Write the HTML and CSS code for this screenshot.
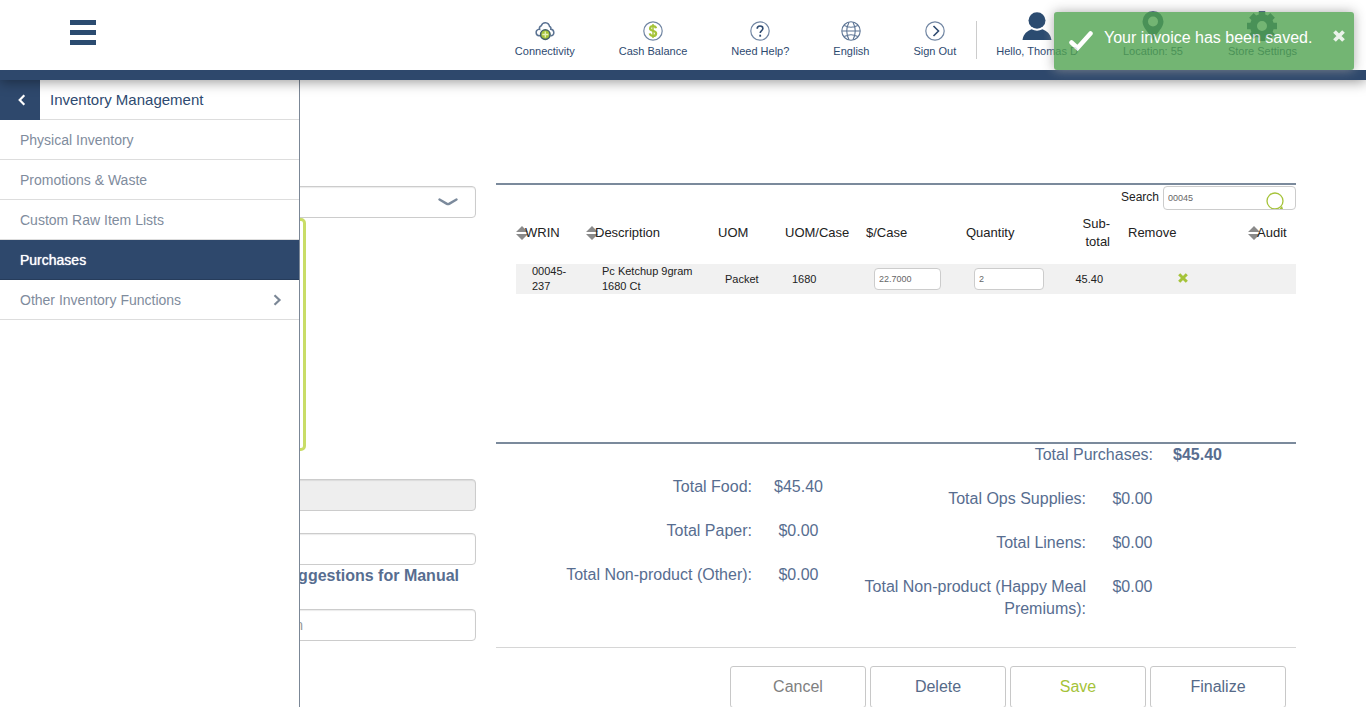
FILE: index.html
```html
<!DOCTYPE html>
<html lang="en">
<head>
<meta charset="utf-8">
<title>Inventory Management - Purchases</title>
<meta name="viewport" content="width=device-width, initial-scale=1">
<link rel="stylesheet" href="styles.css">
</head>
<body>
<header class="topbar">
  <button class="menu-toggle" type="button" aria-label="Menu"><span></span><span></span><span></span></button>
  <nav class="topnav">
    <a class="topnav-item" href="#">
      <svg class="icon" viewBox="0 0 20 20" fill="none" stroke="#5b7393" stroke-width="1.500"><path d="M5 14.800H4A3.300 3.300 0 0 1 3.400 8.400Q4 8.200 4.600 8.400Q3.800 5.500 6.300 4.700Q7.300 1.600 10.500 1.700Q14 2 14.600 5.600Q16.300 6 15.800 8.300A3.300 3.300 0 0 1 16.300 14.800H15.500"/><circle cx="10.300" cy="13.600" r="4.800" fill="#a5c339" stroke="#43606b"/><path d="M10.300 10.500v6M7.300 13.500h6" stroke="#e6f0b8" stroke-width="1.300"/></svg>
      Connectivity</a>
    <a class="topnav-item" href="#">
      <svg class="icon" viewBox="0 0 20 20" fill="none" stroke="#7186a3" stroke-width="1.200"><circle cx="10" cy="10" r="9.200"/><path d="M13 7.300C12.700 5.800 11.700 5.100 10 5.100C8.200 5.100 7.100 6 7.100 7.400C7.100 10.600 13.100 8.900 13.100 12.400C13.100 13.900 12 14.900 10 14.900C8.200 14.900 7.100 14.100 6.800 12.400" stroke="#a5c339" stroke-width="2.300"/><path d="M10 3v14" stroke="#a5c339" stroke-width="1.500"/></svg>
      Cash Balance</a>
    <a class="topnav-item" href="#">
      <svg class="icon" viewBox="0 0 20 20" fill="none" stroke="#7186a3" stroke-width="1.200"><circle cx="10" cy="10" r="9.200"/><path d="M7.200 7.800C7.200 5.900 8.300 5 10 5C11.700 5 12.900 6 12.900 7.500C12.900 9.600 10.200 9.500 10.200 12" stroke="#2e4a70" stroke-width="1.600"/><path d="M10.200 13.700v2" stroke="#2e4a70" stroke-width="1.800"/></svg>
      Need Help?</a>
    <a class="topnav-item" href="#">
      <svg class="icon" viewBox="0 0 20 20" fill="none" stroke="#5d7595" stroke-width="1.100"><circle cx="10" cy="10" r="9.200"/><path d="M1 10h18M3.200 4.500Q10 8 16.800 4.500M3.200 15.500Q10 12 16.800 15.500M8 1.200Q3.500 10 8 18.800M12 1.200Q16.500 10 12 18.800"/></svg>
      English</a>
    <a class="topnav-item" href="#">
      <svg class="icon" viewBox="0 0 20 20" fill="none" stroke="#7186a3" stroke-width="1.200"><circle cx="10" cy="10" r="9.200"/><path d="M8.500 5l5 5-5 5" stroke="#2e4a70" stroke-width="1.600"/></svg>
      Sign Out</a>
  </nav>
  <nav class="topnav topnav-account">
    <a class="topnav-item" href="#">
      <svg class="icon icon-large" viewBox="0 0 30 30" fill="#2b4b70"><ellipse cx="15" cy="9.500" rx="8.500" ry="8.300"/><path d="M0.500 29C1.500 22.500 5.500 20 9.500 18.300Q15 21 20.500 18.300C24.500 20 28.500 22.500 29.500 29z"/></svg>
      Hello, Thomas D</a>
    <a class="topnav-item" href="#">
      <svg class="icon icon-large" viewBox="0 0 30 30" fill="#2b4b70"><path fill-rule="evenodd" d="M15 0A10.500 10.500 0 0 1 25.500 10.500C25.500 17 19 21 15 30C11 21 4.500 17 4.500 10.500A10.500 10.500 0 0 1 15 0zM15 5.500a5 5 0 1 0 0 10a5 5 0 0 0 0-10z"/></svg>
      Location: 55</a>
    <a class="topnav-item" href="#">
      <svg class="icon icon-large" viewBox="0 0 30 30" fill="none" stroke="#2b4b70"><circle cx="15" cy="15" r="8.500" stroke-width="7"/><g stroke-width="6.500"><path d="M15 0v5M15 25v5M0 15h5M25 15h5M4.400 4.400l4 4M21.600 21.600l4 4M25.600 4.400l-4 4M8.400 21.600l-4 4"/></g></svg>
      Store Settings</a>
  </nav>
</header>

<aside class="sidebar">
  <div class="sidebar-head">
    <button class="sidebar-back" type="button" aria-label="Back"><svg viewBox="0 0 12 12" fill="none" stroke="#fff" stroke-width="2.200"><path d="M8.300 1.300L3.700 6l4.600 4.700"/></svg></button>
    <h1 class="sidebar-title">Inventory Management</h1>
  </div>
  <nav class="sidebar-nav">
    <a href="#">Physical Inventory</a>
    <a href="#">Promotions &amp; Waste</a>
    <a href="#">Custom Raw Item Lists</a>
    <a class="selected" href="#" aria-current="page">Purchases</a>
    <a href="#">Other Inventory Functions <svg viewBox="0 0 12 12" fill="none" stroke="#7b8796" stroke-width="2.200"><path d="M3.500 1.300L8.500 6l-5 4.700"/></svg></a>
  </nav>
</aside>

<main class="page">
  <form class="entry">
    <div class="select-wrap">
      <select class="field" aria-label="Vendor"><option></option></select>
      <svg class="select-arrow" viewBox="0 0 20 8" fill="none" stroke="#7b8a9c" stroke-width="2.400" stroke-linecap="round" stroke-linejoin="round"><path d="M1.500 1.500L8.500 5.600Q10 6.400 11.500 5.600L18.500 1.500"/></svg>
    </div>
    <div class="entry-highlight"></div>
    <input class="field" type="text" aria-label="Invoice total" disabled>
    <input class="field field-spaced" type="text" aria-label="Invoice number">
    <label class="entry-label" for="manual">Suggestions for Manual</label>
    <input class="field" id="manual" type="text" placeholder="Enter item number or description">
  </form>

  <section class="invoice">
    <div class="items">
      <div class="search">
        <label for="search">Search</label>
        <div class="search-box">
          <input id="search" class="small-field" type="text" value="00045">
          <svg class="search-icon" viewBox="0 0 18 17" fill="none" stroke="#a5c339" stroke-width="1.300"><circle cx="9" cy="9" r="8"/><path d="M13.500 17l2.500-3 1 3z" fill="#a5c339" stroke="none"/></svg>
        </div>
      </div>
      <table class="items-table">
        <colgroup><col class="c-wrin"><col class="c-desc"><col class="c-uom"><col class="c-case"><col class="c-price"><col class="c-qty"><col class="c-sub"><col class="c-remove"><col class="c-audit"></colgroup>
        <thead>
          <tr>
            <th class="sortable"><svg viewBox="0 0 12 14" fill="#8a8a8a"><path d="M0 6L6 0l6 6zM0 8h12l-6 6z"/></svg>WRIN</th>
            <th class="sortable"><svg viewBox="0 0 12 14" fill="#8a8a8a"><path d="M0 6L6 0l6 6zM0 8h12l-6 6z"/></svg>Description</th>
            <th>UOM</th>
            <th>UOM/Case</th>
            <th>$/Case</th>
            <th>Quantity</th>
            <th class="num">Sub-<br>total</th>
            <th>Remove</th>
            <th class="sortable"><svg viewBox="0 0 12 14" fill="#8a8a8a"><path d="M0 6L6 0l6 6zM0 8h12l-6 6z"/></svg>Audit</th>
          </tr>
        </thead>
        <tbody>
          <tr>
            <td>00045-237</td>
            <td>Pc Ketchup 9gram 1680 Ct</td>
            <td>Packet</td>
            <td>1680</td>
            <td class="entry-cell"><input class="small-field" type="text" value="22.7000" aria-label="Price per case"></td>
            <td class="entry-cell"><input class="small-field" type="text" value="2" aria-label="Quantity"></td>
            <td class="num">45.40</td>
            <td class="center"><button class="remove" type="button" aria-label="Remove"><svg viewBox="0 0 10 10" stroke="#a5c339" stroke-width="3"><path d="M1.200 1.200l7.600 7.600M8.800 1.200L1.200 8.800"/></svg></button></td>
            <td></td>
          </tr>
        </tbody>
      </table>
    </div>

    <div class="totals">
      <dl class="totals-group totals-left">
        <dt>Total Food:</dt><dd>$45.40</dd>
        <dt>Total Paper:</dt><dd>$0.00</dd>
        <dt>Total Non-product (Other):</dt><dd>$0.00</dd>
      </dl>
      <div class="totals-right">
        <div class="grand-total"><span>Total Purchases:</span><strong>$45.40</strong></div>
        <dl class="totals-group">
          <dt>Total Ops Supplies:</dt><dd>$0.00</dd>
          <dt>Total Linens:</dt><dd>$0.00</dd>
          <dt>Total Non-product (Happy Meal Premiums):</dt><dd>$0.00</dd>
        </dl>
      </div>
    </div>

    <div class="actions">
      <button class="btn btn-muted" type="button">Cancel</button>
      <button class="btn" type="button">Delete</button>
      <button class="btn btn-save" type="button">Save</button>
      <button class="btn" type="button">Finalize</button>
    </div>
  </section>
</main>

<div class="toast" role="status">
  <svg class="toast-check" viewBox="0 0 24 20" fill="none" stroke="#fff" stroke-width="4.500" stroke-linecap="round"><path d="M2.500 11.500L8.500 17L21.500 2.500"/></svg>
  <span class="toast-text">Your invoice has been saved.</span>
  <button class="toast-close" type="button" aria-label="Close"><svg viewBox="0 0 12 12" stroke="#fff" stroke-opacity="0.850" stroke-width="3.800"><path d="M1.500 1.500l9 9M10.500 1.500l-9 9"/></svg></button>
</div>
</body>
</html>
```
FILE: styles.css
```css
* { box-sizing: border-box; }

html { scrollbar-width: none; }

body {
  margin: 0;
  min-height: 100vh;
  position: relative;
  background: #fff;
  color: #576d90;
  font-family: "Liberation Sans", Arial, sans-serif;
  font-size: 16px;
  line-height: 22px;
}

button, input, select { font-family: inherit; }
button { padding: 0; border: 0; background: none; cursor: pointer; }
a { color: inherit; text-decoration: none; }
svg { display: block; flex: none; }

/* Top bar */
.topbar {
  position: relative;
  z-index: 3;
  display: flex;
  align-items: flex-start;
  height: 80px;
  padding: 0 69px 0 70px;
  background: #fff;
  border-bottom: 10px solid #2e486c;
  box-shadow: 0 2px 12px rgba(0, 0, 0, 0.4);
}

.menu-toggle {
  display: flex;
  flex-direction: column;
  gap: 5px;
  width: 26px;
  margin: 20px auto 0 0;
}
.menu-toggle span { height: 5px; background: #2b4b70; }

.topnav {
  display: flex;
  align-items: flex-end;
  gap: 44px;
  height: 38px;
  margin-top: 21px;
}
.topnav-account {
  gap: 45px;
  margin-left: 20px;
  padding-left: 19px;
  border-left: 1px solid #ccc;
}
.topnav-item {
  display: flex;
  flex-direction: column;
  align-items: center;
  gap: 2px;
  color: #2e4a70;
  font-size: 11px;
  line-height: 16px;
  white-space: nowrap;
}
.icon { width: 20px; height: 20px; }
.icon-large { width: 30px; height: 30px; }

/* Slide-out menu */
.sidebar {
  position: absolute;
  z-index: 2;
  top: 80px;
  bottom: 0;
  left: 0;
  width: 300px;
  background: #fff;
  border-right: 1px solid #7b8796;
}
.sidebar-head {
  display: flex;
  height: 40px;
  border-bottom: 1px solid #ddd;
}
.sidebar-back {
  display: flex;
  align-items: center;
  justify-content: center;
  width: 40px;
  height: 40px;
  padding-left: 4px;
  background: #2e486c;
}
.sidebar-back svg { width: 12px; height: 12px; }
.sidebar-title {
  margin: 0 0 0 10px;
  color: #2e4a70;
  font-size: 15px;
  font-weight: 400;
  line-height: 40px;
}
.sidebar-nav a {
  display: flex;
  align-items: center;
  justify-content: space-between;
  height: 40px;
  padding: 0 16px 0 20px;
  border-bottom: 1px solid #ddd;
  color: #7f8c9d;
  font-size: 14px;
}
.sidebar-nav svg { width: 12px; height: 12px; }
.sidebar-nav .selected {
  background: #2e486c;
  border-color: #263c5b;
  color: #fff;
  text-shadow: 0 0 1px #fff;
}

/* Page columns */
.page {
  display: grid;
  grid-template-columns: 406fr 800fr;
  gap: 20px;
  align-items: start;
  padding: 103px 70px 0;
}

/* Invoice entry */
.entry { display: flex; flex-direction: column; padding-top: 3px; }
.field {
  width: 100%;
  height: 32px;
  padding: 0 29px;
  border: 1px solid #ccc;
  border-radius: 4px;
  background: #fff;
  box-shadow: inset 0 1px 1px rgba(0, 0, 0, 0.08);
  color: #555;
  font-size: 14px;
}
.field:disabled { background: #eee; }
.field::placeholder { color: #999; }
.field-spaced { margin-top: 22px; }
.select-wrap { position: relative; }
select.field { display: block; appearance: none; }
.select-arrow {
  position: absolute;
  top: 12px;
  right: 18px;
  width: 20px;
  height: 8px;
}
.entry-highlight {
  width: 236px;
  height: 233px;
  margin-bottom: 28px;
  border: 3px solid #c9dd67;
  border-radius: 5px;
}
.entry-label {
  padding-right: 17px;
  margin-bottom: 22px;
  font-weight: 700;
  text-align: right;
}

/* Item list */
.items {
  min-height: 261px;
  border-top: 2px solid #7b8a9c;
  border-bottom: 2px solid #7b8a9c;
  color: #222;
}
.search {
  display: flex;
  justify-content: flex-end;
  gap: 4px;
  padding-top: 1px;
  font-size: 12px;
}
.search-box { position: relative; width: 133px; }
.search-box .small-field { height: 24px; }
.search-icon {
  position: absolute;
  right: 12px;
  bottom: 1px;
  width: 18px;
  height: 17px;
}
.small-field {
  display: block;
  width: 100%;
  height: 22px;
  padding: 0 4px;
  border: 1px solid #ccc;
  border-radius: 4px;
  background: #fff;
  color: #666;
  font-size: 9px;
}

.items-table {
  width: calc(100% - 20px);
  margin-left: 20px;
  table-layout: fixed;
  border-collapse: collapse;
}
.c-wrin { width: 70px; }
.c-desc { width: 123px; }
.c-uom { width: 67px; }
.c-case { width: 81px; }
.c-price { width: 100px; }
.c-qty { width: 103px; }
.c-sub { width: 59px; }
.c-remove { width: 129px; }
.c-audit { width: 48px; }
.items-table th {
  padding: 5px 0 13px 9px;
  font-size: 13px;
  font-weight: 400;
  line-height: 18px;
  text-align: left;
}
.items-table .sortable { position: relative; }
.sortable svg {
  position: absolute;
  z-index: -1;
  top: 16px;
  left: 0;
  width: 12px;
  height: 14px;
}
.items-table td {
  height: 30px;
  padding: 0 15px 0 16px;
  background: #f1f1f1;
  font-size: 11px;
  line-height: 15px;
}
.items-table th.num { padding-right: 9px; text-align: right; }
.items-table td.num { padding: 0 16px 0 0; text-align: right; }
.items-table td.entry-cell { padding: 0 16px 0 17px; }
.items-table td.center { padding: 0 2px 2px 0; }
.items-table td:empty { padding: 0; }
.remove { display: block; margin: 0 auto; }
.remove svg { width: 10px; height: 10px; }

/* Totals */
.totals {
  display: flex;
  gap: 16px;
  min-height: 203px;
}
.totals-left { margin-top: 32px; flex: 349; }
.totals-right { flex: 435; }
.totals-group {
  display: grid;
  grid-template-columns: 1fr 93px;
  align-content: start;
  row-gap: 22px;
  margin-bottom: 0;
}
.totals-right .totals-group { width: 318px; margin-top: 22px; }
.totals-group dt { text-align: right; }
.totals-group dd { margin: 0; text-align: center; }
.grand-total { display: flex; gap: 20px; }
.grand-total span { width: 292px; text-align: right; }

/* Actions */
.actions {
  display: flex;
  justify-content: flex-end;
  gap: 4px;
  padding: 18px 10px 0;
  border-top: 1px solid #d6d6d6;
}
.btn {
  width: 136px;
  height: 42px;
  border: 1px solid #c8c8c8;
  border-radius: 3px;
  background: #fff;
  color: #566a88;
  font-size: 16px;
}
.btn-muted { color: #808080; }
.btn-save { color: #a5c339; }

/* Notification */
.toast {
  position: absolute;
  z-index: 4;
  top: 12px;
  right: 12px;
  display: flex;
  align-items: center;
  width: 300px;
  height: 58px;
  padding: 0 9px 0 15px;
  border-radius: 3px;
  background: #51a351;
  box-shadow: 0 0 12px #999;
  color: #fff;
  opacity: 0.8;
}
.toast-check { width: 24px; height: 20px; }
.toast-text { margin: 0 auto 6px 11px; white-space: nowrap; }
.toast-close { margin-bottom: 10px; }
.toast-close svg { width: 12px; height: 12px; }
```
